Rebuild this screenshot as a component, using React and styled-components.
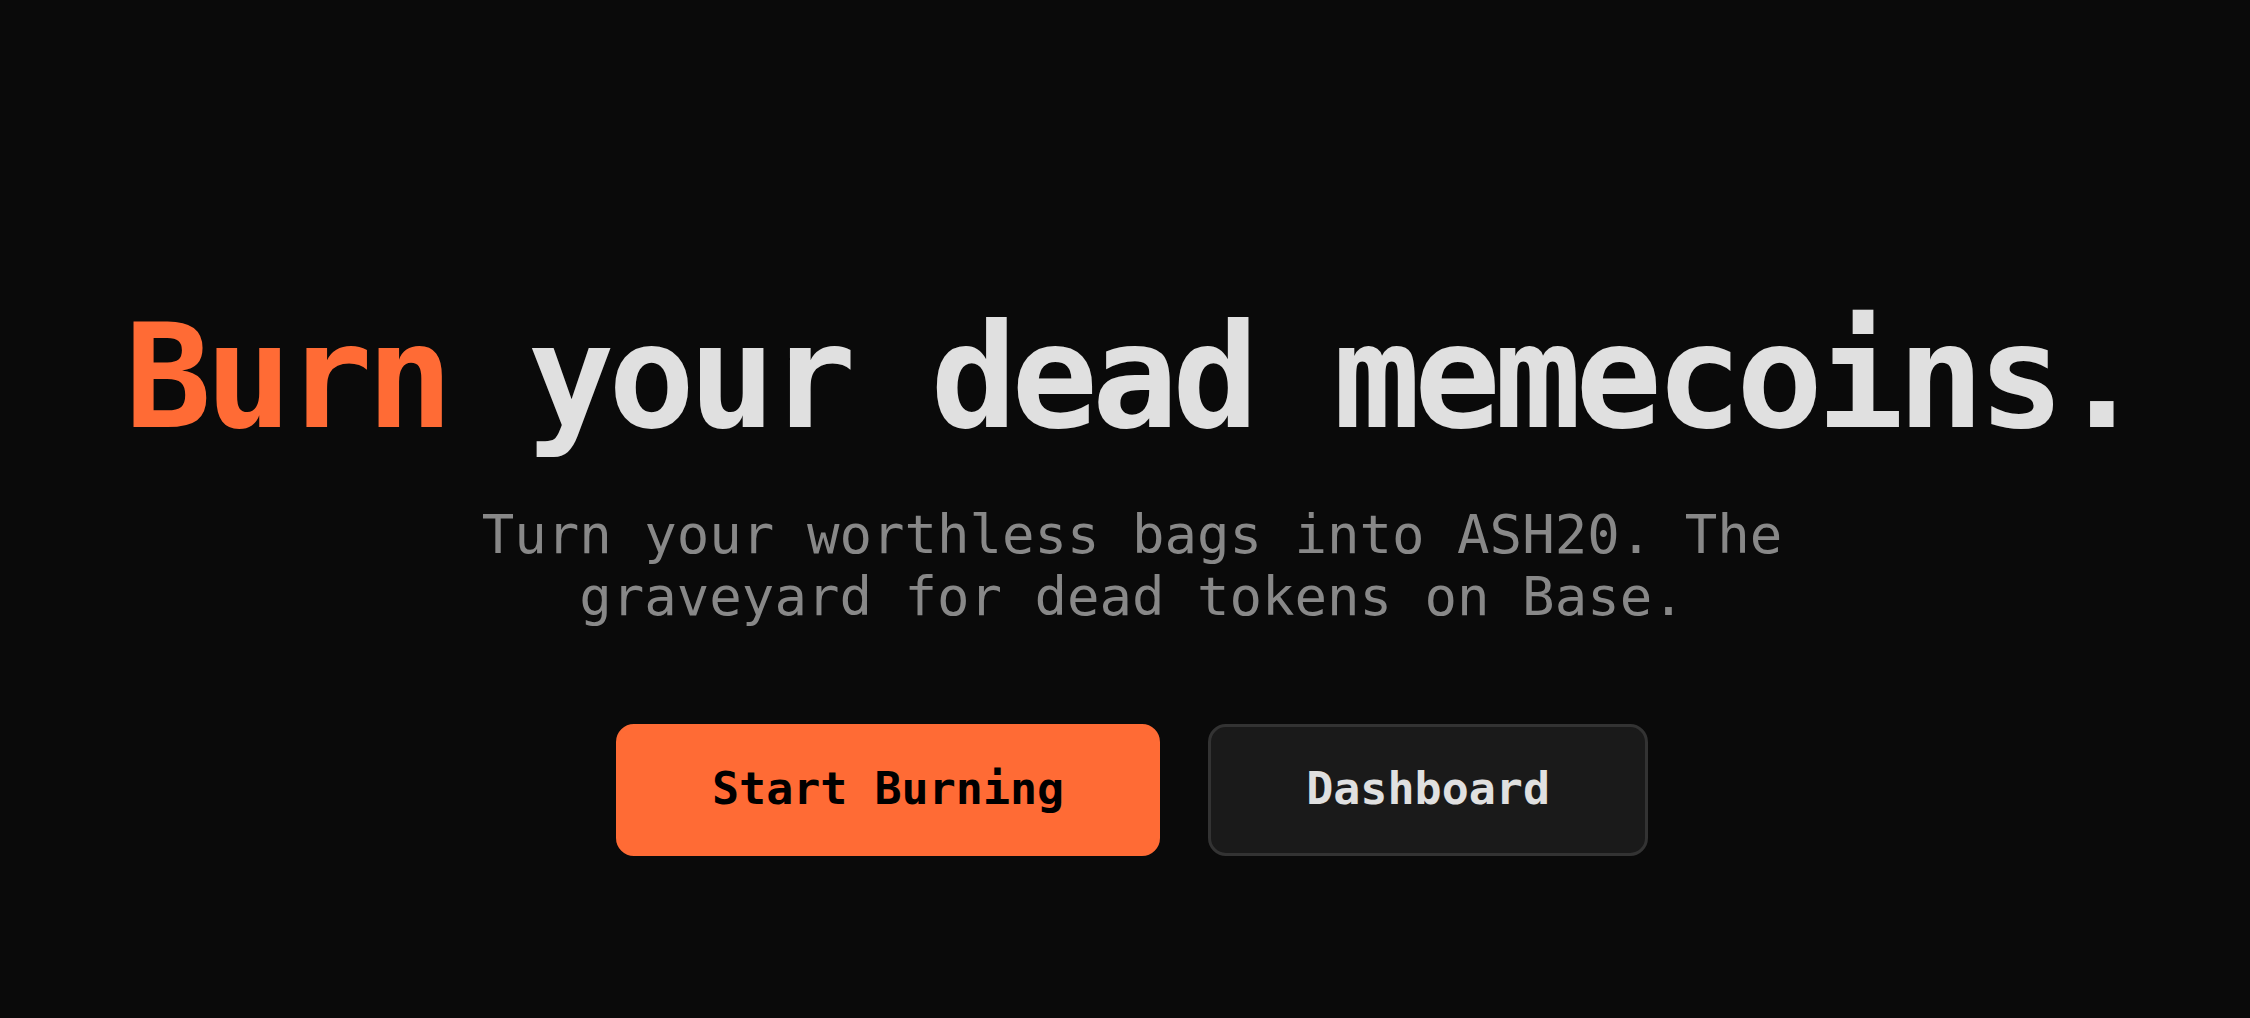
import React from 'react'
import styled, { createGlobalStyle } from 'styled-components'

const GlobalStyle = createGlobalStyle`
  * {
    box-sizing: border-box;
  }
  html, body {
    margin: 0;
    padding: 0;
    background: #0a0a0a;
  }
  body {
    font-family: "DejaVu Sans Mono", "Liberation Mono", monospace;
    color: #e0e0e0;
  }
`;

const Page = styled.main`
  min-height: 100vh;
  padding: 305px 0 0 14px;
  display: flex;
  flex-direction: column;
  align-items: center;
  text-align: center;
`;

const Heading = styled.h1`
  margin: 0;
  font-size: 144px;
  line-height: 1;
  font-weight: 700;
  letter-spacing: -0.0425em;
  color: #e0e0e0;
  white-space: nowrap;
`;

const Accent = styled.span`
  color: #ff6b35;
`;

const Subtitle = styled.p`
  margin: 55px 0 0;
  max-width: 1360px;
  font-size: 54px;
  line-height: 62px;
  color: #888888;
`;

const Actions = styled.div`
  margin-top: 96px;
  display: flex;
  gap: 48px;
`;

const Button = styled.a`
  display: inline-block;
  padding: 28px ${p => (p.$primary ? '93px' : '95px')} 30px;
  font-family: inherit;
  font-size: 45px;
  line-height: 1.5;
  font-weight: 700;
  border-radius: 18px;
  border: 3px solid ${p => (p.$primary ? '#ff6b35' : '#333333')};
  background: ${p => (p.$primary ? '#ff6b35' : '#1a1a1a')};
  color: ${p => (p.$primary ? '#000000' : '#e0e0e0')};
  text-decoration: none;
  cursor: pointer;
`;

const App = () => {
  return (
    <>
      <GlobalStyle />
      <Page>
        <Heading>
          <Accent>Burn</Accent> your dead memecoins.
        </Heading>
        <Subtitle>
          Turn your worthless bags into ASH20. The graveyard for dead tokens on Base.
        </Subtitle>
        <Actions>
          <Button $primary href="#burn">Start Burning</Button>
          <Button href="#dashboard">Dashboard</Button>
        </Actions>
      </Page>
    </>
  )
}

export default App
